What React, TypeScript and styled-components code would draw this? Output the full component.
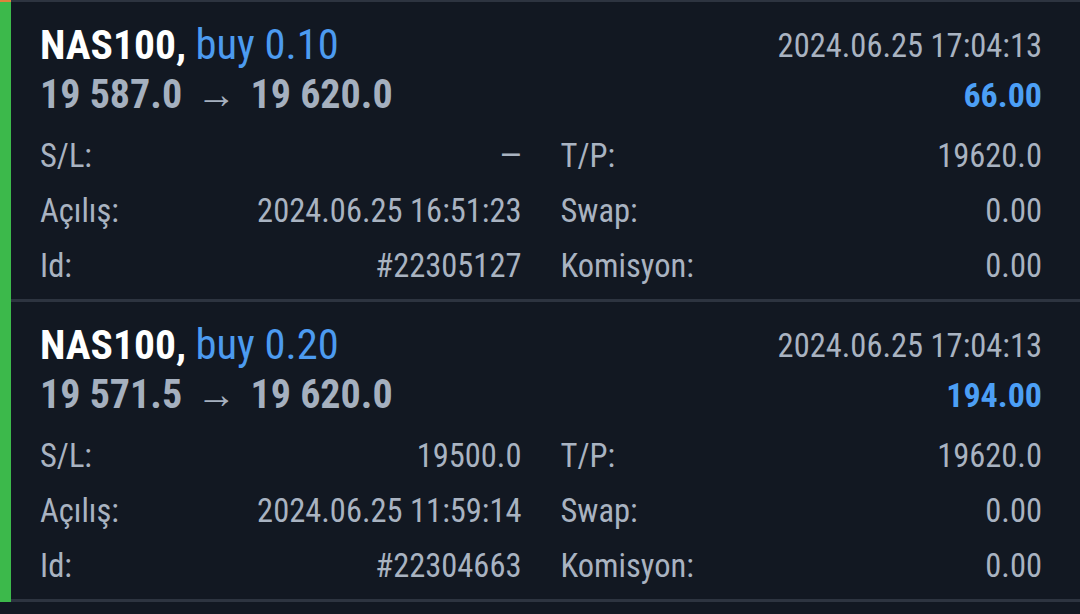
import styled, { createGlobalStyle } from "styled-components";

const GlobalStyle = createGlobalStyle`
	html, body {
		margin: 0;
		padding: 0;
		background: #121822;
	}
	body {
		font-family: "Roboto Condensed", Roboto, "Liberation Sans", sans-serif;
	}
`;

const StyledList = styled.div`
	display: flex;
	flex-direction: column;
	width: 1080px;
	height: 614px;
	overflow: hidden;
	background: #121822;
`;

const StyledPrevEnd = styled.div`
	display: flex;
	height: 2px;
	flex-shrink: 0;
`;

const StyledPrevBar = styled.div`
	width: 11px;
	background: #e0823c;
`;

const StyledPrevLine = styled.div`
	flex: 1;
	background: #2d3440;
`;

const StyledPosition = styled.div`
	display: flex;
	flex-shrink: 0;
	height: 300px;
`;

const StyledSideBar = styled.div<{ $color: string }>`
	width: 11px;
	background: ${(p) => p.$color};
`;

const StyledPositionBody = styled.div`
	flex: 1;
	padding: 18px 38px 6px 29px;
	border-bottom: 3px solid #2d3440;
`;

const StyledHeader = styled.div`
	display: flex;
	justify-content: space-between;
	margin-bottom: 8px;
`;

const StyledHeaderCol = styled.div<{ $right?: boolean }>`
	display: flex;
	flex-direction: column;
	align-items: ${(p) => (p.$right ? "flex-end" : "flex-start")};
`;

const StyledTitle = styled.div`
	height: 50px;
	line-height: 50px;
	font-size: 41.5px;
	font-weight: 700;
	color: #ffffff;
	white-space: nowrap;
`;

const StyledVolume = styled.span`
	font-size: 42.5px;
	font-weight: 400;
	color: #4c9bf0;
`;

const StyledPrices = styled.div`
	height: 50px;
	line-height: 50px;
	font-size: 40px;
	font-weight: 700;
	color: #a5b0bf;
	white-space: nowrap;
`;

const StyledArrow = styled.span`
	font-weight: 400;
	margin: 0 5px;
`;

const StyledTime = styled.div`
	height: 50px;
	line-height: 53px;
	font-size: 32.5px;
	color: #a9b3c1;
`;

const StyledProfit = styled.div`
	height: 50px;
	line-height: 51px;
	font-size: 34px;
	font-weight: 700;
	color: #4c9ff5;
`;

const StyledDetails = styled.div`
	display: grid;
	grid-template-columns: 1fr 1fr;
	column-gap: 39px;
`;

const StyledDetailRow = styled.div`
	display: flex;
	justify-content: space-between;
	height: 55px;
	line-height: 56px;
	font-size: 32.5px;
	color: #a9b3c1;
	white-space: nowrap;
`;

interface Position {
	symbol: string;
	volume: string;
	openPrice: string;
	closePrice: string;
	time: string;
	profit: string;
	sl: string;
	tp: string;
	openTime: string;
	swap: string;
	id: string;
	commission: string;
}

const positions: Position[] = [
	{
		symbol: "NAS100",
		volume: "buy 0.10",
		openPrice: "19 587.0",
		closePrice: "19 620.0",
		time: "2024.06.25 17:04:13",
		profit: "66.00",
		sl: "\u2014",
		tp: "19620.0",
		openTime: "2024.06.25 16:51:23",
		swap: "0.00",
		id: "#22305127",
		commission: "0.00",
	},
	{
		symbol: "NAS100",
		volume: "buy 0.20",
		openPrice: "19 571.5",
		closePrice: "19 620.0",
		time: "2024.06.25 17:04:13",
		profit: "194.00",
		sl: "19500.0",
		tp: "19620.0",
		openTime: "2024.06.25 11:59:14",
		swap: "0.00",
		id: "#22304663",
		commission: "0.00",
	},
];

const DetailRow = ({ label, value }: { label: string; value: string }) => (
	<StyledDetailRow>
		<span>{label}</span>
		<span>{value}</span>
	</StyledDetailRow>
);

const PositionItem = ({ position }: { position: Position }) => (
	<StyledPosition>
		<StyledSideBar $color="#3cb94b" />
		<StyledPositionBody>
			<StyledHeader>
				<StyledHeaderCol>
					<StyledTitle>
						{position.symbol}, <StyledVolume>{position.volume}</StyledVolume>
					</StyledTitle>
					<StyledPrices>
						{position.openPrice}
						<StyledArrow>{" \u2192 "}</StyledArrow>
						{position.closePrice}
					</StyledPrices>
				</StyledHeaderCol>
				<StyledHeaderCol $right>
					<StyledTime>{position.time}</StyledTime>
					<StyledProfit>{position.profit}</StyledProfit>
				</StyledHeaderCol>
			</StyledHeader>
			<StyledDetails>
				<DetailRow label="S/L:" value={position.sl} />
				<DetailRow label="T/P:" value={position.tp} />
				<DetailRow label="Açılış:" value={position.openTime} />
				<DetailRow label="Swap:" value={position.swap} />
				<DetailRow label="Id:" value={position.id} />
				<DetailRow label="Komisyon:" value={position.commission} />
			</StyledDetails>
		</StyledPositionBody>
	</StyledPosition>
);

export default function App() {
	return (
		<>
			<GlobalStyle />
			<StyledList>
				<StyledPrevEnd>
					<StyledPrevBar />
					<StyledPrevLine />
				</StyledPrevEnd>
				{positions.map((p) => (
					<PositionItem key={p.id} position={p} />
				))}
			</StyledList>
		</>
	);
}
